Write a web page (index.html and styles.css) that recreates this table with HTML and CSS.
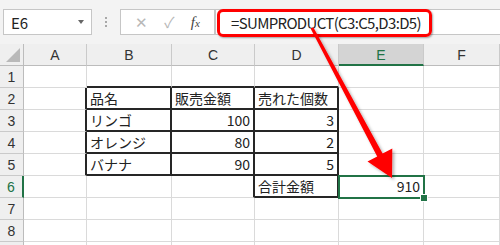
FILE: index.html
```html
<!DOCTYPE html>
<html>
<head>
	<meta charset="utf-8"/>
	<title>SUMPRODUCT</title>
	<link rel="stylesheet" href="styles.css">
</head>
<body>
	<div class="app">
		<div class="fbar">
			<div class="namebox"><span>E6</span><i class="caret"></i></div>
			<div class="grip"><i></i><i></i><i></i></div>
			<div class="btns">
				<span class="btn off">&#x2715;</span>
				<span class="btn off">&#x2713;</span>
				<span class="btn fx">f<small>x</small></span>
			</div>
			<div class="input"><span class="formula">=SUMPRODUCT(C3:C5,D3:D5)</span></div>
		</div>

		<div class="sheet">
			<div class="hd corner"></div>
			<div class="hd col">A</div>
			<div class="hd col">B</div>
			<div class="hd col">C</div>
			<div class="hd col">D</div>
			<div class="hd col sel">E</div>
			<div class="hd col">F</div>

			<div class="hd row">1</div>
			<div class="c"></div><div class="c bt"></div><div class="c bt"></div><div class="c bt"></div><div class="c"></div><div class="c"></div>

			<div class="hd row">2</div>
			<div class="c br"></div><div class="c bx">品名</div><div class="c bx">販売金額</div><div class="c bx">売れた個数</div><div class="c"></div><div class="c"></div>

			<div class="hd row">3</div>
			<div class="c br"></div><div class="c bx">リンゴ</div><div class="c bx num">100</div><div class="c bx num">3</div><div class="c"></div><div class="c"></div>

			<div class="hd row">4</div>
			<div class="c br"></div><div class="c bx">オレンジ</div><div class="c bx num">80</div><div class="c bx num">2</div><div class="c"></div><div class="c"></div>

			<div class="hd row">5</div>
			<div class="c br"></div><div class="c bx">バナナ</div><div class="c bx num">90</div><div class="c bx num">5</div><div class="c"></div><div class="c"></div>

			<div class="hd row sel">6</div>
			<div class="c"></div><div class="c"></div><div class="c br"></div><div class="c bx">合計金額</div><div class="c num active">910</div><div class="c"></div>

			<div class="hd row">7</div>
			<div class="c"></div><div class="c"></div><div class="c"></div><div class="c"></div><div class="c"></div><div class="c"></div>

			<div class="hd row">8</div>
			<div class="c"></div><div class="c"></div><div class="c"></div><div class="c"></div><div class="c"></div><div class="c"></div>

			<div class="hd row"></div>
			<div class="c"></div><div class="c"></div><div class="c"></div><div class="c"></div><div class="c"></div><div class="c"></div>
		</div>

		<!-- pointer from the formula down to the result cell -->
		<svg class="arrow" width="500" height="245" viewBox="0 0 500 245">
			<defs>
				<filter id="shade" x="-20%" y="-20%" width="140%" height="140%">
					<feDropShadow dx="2" dy="2" stdDeviation="1.5" flood-color="#000" flood-opacity="0.3"/>
				</filter>
			</defs>
			<polygon fill="#ff0000" filter="url(#shade)"
				points="310.7,28.7 313.3,27.3 382.6,153.6 392.3,148.5 392,178 367.5,161.5 377.2,156.4"/>
		</svg>
	</div>
</body>
</html>
```

FILE: styles.css
```css
*{
	margin: 0;
	padding: 0;
	box-sizing: border-box;
}
body{
	width: 500px;
	height: 245px;
	overflow: hidden;
	background: #fff;
	font-family: "Noto Sans CJK JP", "Liberation Sans", sans-serif;
	color: #222;
}
.app{
	position: relative;
	width: 500px;
	height: 245px;
	overflow: hidden;
}

/* formula bar */
.fbar{
	display: flex;
	align-items: flex-start;
	height: 44px;
	padding: 9px 0 0 3px;
	background: #f3f3f3;
}
.namebox{
	display: flex;
	align-items: center;
	justify-content: space-between;
	width: 89px;
	height: 26px;
	padding: 0 7px 0 7px;
	background: #fff;
	border: 1px solid #c6c6c6;
	font-size: 15px;
}
.caret{
	width: 0;
	height: 0;
	border-left: 3px solid transparent;
	border-right: 3px solid transparent;
	border-top: 4px solid #666;
}
.grip{
	display: flex;
	flex-direction: column;
	align-items: center;
	justify-content: center;
	gap: 2px;
	width: 28px;
	height: 26px;
}
.grip i{
	width: 2px;
	height: 2px;
	background: #a8a8a8;
}
.btns{
	display: flex;
	align-items: center;
	justify-content: space-around;
	width: 95px;
	height: 26px;
	padding: 0 6px;
	background: #fff;
	border: 1px solid #c6c6c6;
}
.btn{
	font-size: 15px;
	line-height: 24px;
}
.btn.off{
	color: #b8b8b8;
}
.btn.fx{
	font-family: "Liberation Serif", serif;
	font-style: italic;
	color: #444;
	font-size: 15px;
}
.btn.fx small{
	font-size: 11px;
}
.input{
	flex: 1;
	height: 26px;
	padding-left: 1px;
	background: #fff;
	border: 1px solid #c6c6c6;
	border-right: none;
}
.formula{
	display: inline-block;
	height: 28px;
	margin-top: -2px;
	padding: 0 8px 0 11px;
	border: 3px solid #f00;
	border-radius: 6px;
	box-shadow: 1px 1px 2px rgba(0,0,0,.35);
	font-size: 15px;
	letter-spacing: -0.65px;
	line-height: 22px;
	color: #222;
}

/* worksheet */
.sheet{
	display: grid;
	grid-template-columns: 24px 63px 85px 83px 84px 85px 76px;
	grid-auto-rows: 22px;
	font-size: 14px;
}
.c{
	border-right: 1px solid #dadada;
	border-bottom: 1px solid #dadada;
	padding: 0 3px;
	line-height: 21px;
	white-space: nowrap;
	background: #fff;
}
.num{
	text-align: right;
}
.bt{
	border-bottom: 2px solid #262626;
}
.br{
	border-right: 2px solid #262626;
}
.bx{
	border-right: 2px solid #262626;
	border-bottom: 2px solid #262626;
}
.hd{
	background: #efefef;
	color: #333;
	text-align: center;
	line-height: 22px;
	font-family: "Liberation Sans", sans-serif;
	font-size: 14px;
}
.hd.col{
	border-right: 1px solid #cacaca;
	border-bottom: 1px solid #bcbcbc;
}
.hd.col.sel{
	background: #d4d4d4;
	color: #217346;
	border-bottom: 2px solid #217346;
}
.hd.row{
	border-right: 1px solid #bcbcbc;
	border-bottom: 1px solid #cacaca;
}
.hd.row.sel{
	color: #217346;
	border-right: 2px solid #217346;
}
.corner{
	position: relative;
	border-right: 1px solid #bcbcbc;
	border-bottom: 1px solid #bcbcbc;
}
.corner:after{
	content: "";
	position: absolute;
	right: 3px;
	bottom: 3px;
	border-left: 14px solid transparent;
	border-bottom: 14px solid #b9b9b9;
}
.active{
	position: relative;
}
.active:after{
	content: "";
	position: absolute;
	left: -1px;
	top: -1px;
	right: -2px;
	bottom: -2px;
	border: 2px solid #217346;
}
.active:before{
	content: "";
	position: absolute;
	right: -5px;
	bottom: -5px;
	width: 6px;
	height: 6px;
	background: #217346;
	border: 1px solid #fff;
	z-index: 1;
}

.arrow{
	position: absolute;
	left: 0;
	top: 0;
	pointer-events: none;
}
```
